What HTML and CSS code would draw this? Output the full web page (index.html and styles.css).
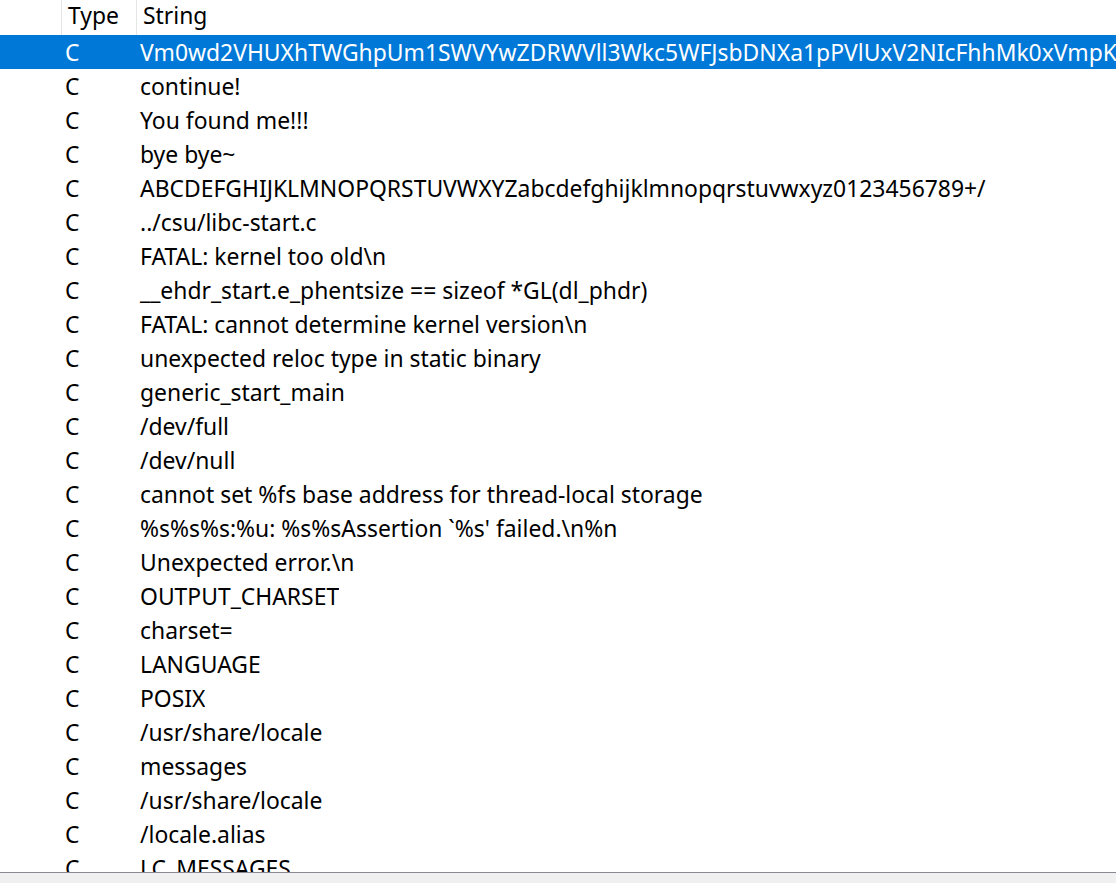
FILE: index.html
```html
<!DOCTYPE html>
<html>
<head>
<meta charset="utf-8">
<link rel="stylesheet" href="styles.css">
</head>
<body>
<div class="view">
  <div class="header">
    <div class="cell gutter"></div>
    <div class="cell type">Type</div>
    <div class="cell string">String</div>
  </div>
  <div class="rows">
    <div class="row selected"><div class="gutter"></div><div class="type">C</div><div class="string">Vm0wd2VHUXhTWGhpUm1SWVYwZDRWVll3Wkc5WFJsbDNXa1pPVlUxV2NIcFhhMk0xVmpKS1IyTkVRbUZXVmxsM1ZtcEdZV014WkhGUmJHUlhaV3hhZVZacVNqUlpWMDE0Vkc1T2FWSnRVbGhaVkVwT1pVWmFkR05GZEZSTlZUVjZWMnRvVDFWdFNrbFJiVGxWVm14YU0xWnNXbUZqVmtaMFVteFNUbUY2UlRGV1ZFb3dWakZhV0ZOcmFHaFNlbXhXVm1wT1QwMHhjRlpYYlVaclVqQTFSMXBGV2xOVWJGcFlaSHBHVjFaRmIzZFdha1poVjBaT2NtRkhhRk5sYlhoWFZtMHdlR0l5U1hoVWJGWlVZbFZhY1ZscldtRlZSbEpYVjJ0MGExWnRVbmhWTW5oM1ZqRmFSbUl6WkZkaGExcG9WakJhVDJOdFJraGhSazVzWWxob1dGWnRNWGRVTWtsNFZXeHNVbGRGV2xSV2JGcExVMnhzVjFac2NHdE5WM2hYVjJ0YVQxWXdNVmRYYlVaWFlURktTRlpxUmtwbFZsWlpXa1prYUdFeGNGbFhhMVpoVkRKT2MyTkZhR3BTYkVwVVZteG9RMkl4V25SbFJYQnJVakZhU0ZsVlduTldNVnAwWVVoS1ZtSkhhRVJXTUZwVFZqRndSMVJzWkdsU2JHOTNWa2Q0YjJNeFdsaFRhMlJxVWtVMVYxWnRlRXRXYkZWM1YyNWtVMkV5ZUZKVlYzaDNZVlpLUm1Fd1JsZGhNVVpJVkd0V1RWUXdTWGxXYWtaaFV6RmFWMVJ0Um14V2JYaFlWakl4Y2xaSFZsUldibWhoVWxad2FGbHFTbTlVYkZKWFYxUkNXbFpzY0ZkWGJYQk9XbFpzZDFWRlJsUldWbFl6V1ZWa1dtUkZSazlUYkdoVFZteHdkMVpZY0hKWlZWSllWR3BHV2xaVmNEQlVNVXByWVZkTmVWUnJSbGRTUlZwSlZtcEdhMVpzWkhWVGJVWm9UVlZ3VlZaR1l6QmlNazVVV1ZOelZsUldUMDFHV1hKV1ZWcDBUVmhzVTFKdFVrZFZNVlpIVmpGYVNGbFhPVlpXTTBKSFdsVmFZVmRXUm5Ka1JtUlRUVEk0ZUZZeFdsTlNNV1IwVm10a1dHRXpVbkpWYkZKSFZrWmFjVk5zYUc1U1ZFWjNWVmN4UjFac1NYcFJhemxYVm14S1NGWXllRk5qTVd0NlYyeFNWRkpWY0VwV2JYQkhXVlV4VjFwR1pGUmlTRUpYVkZaYWMxTkdiRFpTYlhScVVqQlpNbFpIZUc5VU1rcEhZMFpHVjAxR2NFeFdhMXBoVTBVeFZsWnJOVk5pU0VKWlYxZDBZV014V1hwUmJVWmFWbXhaTUZrd1l6QlNNVkpIVTFod1ZWSlljRmhXVkVKUFRsWkdWbFJVVmxaaFZGWjBVbXhLTUdGRk1WWlRiRVpoVm14d1VGcFdXbEpsVmtaWlUydHZORmxWVm1GWGJGcHpWbGhzYjJKV1dtOVZNRnBXWkVaV1ZGRldVbFZTVkRGdVZsRmpkbG8wVVVFOVBRPT0=</div></div>
    <div class="row"><div class="gutter"></div><div class="type">C</div><div class="string">continue!</div></div>
    <div class="row"><div class="gutter"></div><div class="type">C</div><div class="string">You found me!!!</div></div>
    <div class="row"><div class="gutter"></div><div class="type">C</div><div class="string">bye bye~</div></div>
    <div class="row"><div class="gutter"></div><div class="type">C</div><div class="string">ABCDEFGHIJKLMNOPQRSTUVWXYZabcdefghijklmnopqrstuvwxyz0123456789+/</div></div>
    <div class="row"><div class="gutter"></div><div class="type">C</div><div class="string">../csu/libc-start.c</div></div>
    <div class="row"><div class="gutter"></div><div class="type">C</div><div class="string">FATAL: kernel too old\n</div></div>
    <div class="row"><div class="gutter"></div><div class="type">C</div><div class="string">__ehdr_start.e_phentsize == sizeof *GL(dl_phdr)</div></div>
    <div class="row"><div class="gutter"></div><div class="type">C</div><div class="string">FATAL: cannot determine kernel version\n</div></div>
    <div class="row"><div class="gutter"></div><div class="type">C</div><div class="string">unexpected reloc type in static binary</div></div>
    <div class="row"><div class="gutter"></div><div class="type">C</div><div class="string">generic_start_main</div></div>
    <div class="row"><div class="gutter"></div><div class="type">C</div><div class="string">/dev/full</div></div>
    <div class="row"><div class="gutter"></div><div class="type">C</div><div class="string">/dev/null</div></div>
    <div class="row"><div class="gutter"></div><div class="type">C</div><div class="string">cannot set %fs base address for thread-local storage</div></div>
    <div class="row"><div class="gutter"></div><div class="type">C</div><div class="string">%s%s%s:%u: %s%sAssertion `%s' failed.\n%n</div></div>
    <div class="row"><div class="gutter"></div><div class="type">C</div><div class="string">Unexpected error.\n</div></div>
    <div class="row"><div class="gutter"></div><div class="type">C</div><div class="string">OUTPUT_CHARSET</div></div>
    <div class="row"><div class="gutter"></div><div class="type">C</div><div class="string">charset=</div></div>
    <div class="row"><div class="gutter"></div><div class="type">C</div><div class="string">LANGUAGE</div></div>
    <div class="row"><div class="gutter"></div><div class="type">C</div><div class="string">POSIX</div></div>
    <div class="row"><div class="gutter"></div><div class="type">C</div><div class="string">/usr/share/locale</div></div>
    <div class="row"><div class="gutter"></div><div class="type">C</div><div class="string">messages</div></div>
    <div class="row"><div class="gutter"></div><div class="type">C</div><div class="string">/usr/share/locale</div></div>
    <div class="row"><div class="gutter"></div><div class="type">C</div><div class="string">/locale.alias</div></div>
    <div class="row"><div class="gutter"></div><div class="type">C</div><div class="string">LC_MESSAGES</div></div>
    <div class="row"><div class="gutter"></div><div class="type">C</div><div class="string">LC_ALL</div></div>
  </div>
  <div class="statusbar"></div>
</div>
</body>
</html>
```
FILE: styles.css
```css
html, body {
  margin: 0;
  padding: 0;
  background: #ffffff;
}
.view {
  width: 1116px;
  height: 883px;
  display: flex;
  flex-direction: column;
  overflow: hidden;
  font-family: "Noto Sans", "Open Sans", sans-serif;
  font-size: 22.9px;
  color: #000000;
}
.header {
  display: flex;
  height: 35px;
  flex: 0 0 35px;
  background: #ffffff;
}
.header .cell {
  box-sizing: border-box;
  height: 35px;
  line-height: 31px;
  white-space: nowrap;
}
.header .gutter {
  width: 62px;
  flex: 0 0 62px;
  border-right: 1px solid #e5e5e5;
}
.header .type {
  width: 75px;
  flex: 0 0 75px;
  padding-left: 6px;
  border-right: 1px solid #e5e5e5;
}
.header .string {
  flex: 1;
  padding-left: 6px;
}
.rows {
  flex: 1;
  overflow: hidden;
}
.row {
  display: flex;
  box-sizing: border-box;
  height: 34px;
  padding-top: 2px;
  line-height: 32px;
  white-space: nowrap;
}
.row .gutter {
  flex: 0 0 62px;
}
.row .type {
  flex: 0 0 75px;
  padding-left: 3px;
  box-sizing: border-box;
}
.row .string {
  padding-left: 3px;
  overflow: hidden;
}
.row.selected {
  background: #0078d7;
  color: #ffffff;
}
.statusbar {
  flex: 0 0 10px;
  height: 10px;
  border-top: 1px solid #8a8a94;
  background: #f0f0f0;
}
```
